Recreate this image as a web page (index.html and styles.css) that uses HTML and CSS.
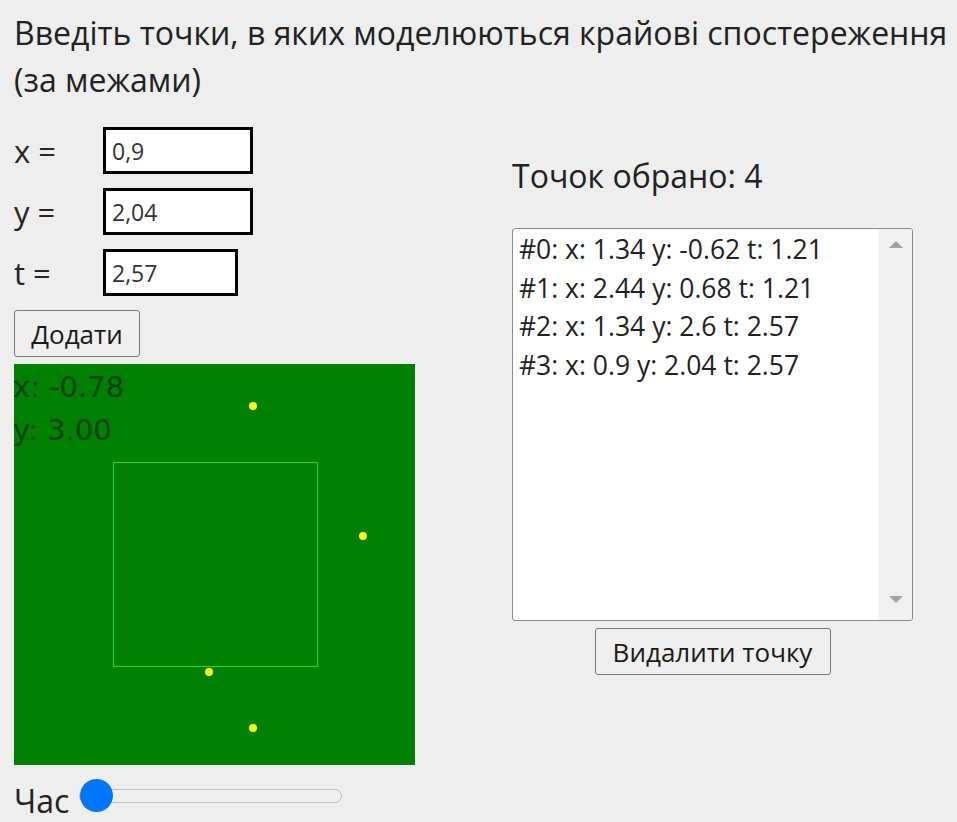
FILE: index.html
```html
<!DOCTYPE html>
<html lang="uk">
<head>
<meta charset="utf-8">
<title>Крайові спостереження</title>
<link rel="stylesheet" href="styles.css">
</head>
<body>
<div class="page">
  <h1 class="title">Введіть точки, в яких моделюються крайові спостереження (за межами)</h1>

  <div class="main">
    <section class="left">
      <div class="field">
        <label class="field-label" for="px">x =</label>
        <input class="field-input" id="px" type="text" value="0,9">
      </div>
      <div class="field">
        <label class="field-label" for="py">y =</label>
        <input class="field-input" id="py" type="text" value="2,04">
      </div>
      <div class="field">
        <label class="field-label" for="pt">t =</label>
        <input class="field-input field-input-short" id="pt" type="text" value="2,57">
      </div>
      <div class="actions">
        <button class="btn" type="button">Додати</button>
      </div>

      <svg class="plot" width="401" height="401" viewBox="0 0 401 401">
        <rect x="0" y="0" width="401" height="401" fill="#008000"/>
        <text class="plot-coord" x="-1" y="33">x: -0.78</text>
        <text class="plot-coord" x="-1" y="76">y: 3.00</text>
        <rect x="99.5" y="98.5" width="204" height="204" fill="none" stroke="#2ecc2e" stroke-width="1.2"/>
        <circle cx="239" cy="42" r="4" fill="#ffff1a"/>
        <circle cx="349" cy="172" r="4" fill="#ffff1a"/>
        <circle cx="195" cy="308" r="4" fill="#ffff1a"/>
        <circle cx="239" cy="364" r="4" fill="#ffff1a"/>
      </svg>

      <div class="time-row">
        <label class="time-label" for="time">Час</label>
        <input class="time-range" id="time" type="range" min="0" max="100" value="0">
      </div>
    </section>

    <section class="right">
      <div class="count">Точок обрано: 4</div>
      <div class="listbox">
        <ul class="list">
          <li>#0: x: 1.34 y: -0.62 t: 1.21</li>
          <li>#1: x: 2.44 y: 0.68 t: 1.21</li>
          <li>#2: x: 1.34 y: 2.6 t: 2.57</li>
          <li>#3: x: 0.9 y: 2.04 t: 2.57</li>
        </ul>
        <div class="scrollbar">
          <span class="arrow arrow-up"></span>
          <span class="arrow arrow-down"></span>
        </div>
      </div>
      <div class="actions-center">
        <button class="btn" type="button">Видалити точку</button>
      </div>
    </section>
  </div>
</div>
</body>
</html>
```

FILE: styles.css
```css
html, body {
  margin: 0;
  padding: 0;
  background: #eeeeee;
}

body {
  font-family: "Open Sans", "Noto Sans", sans-serif;
  color: #1a1a1a;
}

.page {
  padding: 9px 0 0 14px;
}

.title {
  margin: 0;
  font-size: 32px;
  font-weight: 400;
  line-height: 47px;
  color: #222;
}

.main {
  display: flex;
  margin-top: 24px;
}

/* left column: inputs, plot and time slider */
.left {
  width: 401px;
  display: flex;
  flex-direction: column;
}

.field {
  display: flex;
  align-items: center;
  height: 47px;
  margin-bottom: 14px;
}

.field-label {
  width: 89px;
  font-size: 31px;
  color: #262626;
}

.field-input {
  box-sizing: border-box;
  width: 150px;
  height: 47px;
  border: 3px solid #000;
  background: #fff;
  padding: 0 6px;
  font-family: "Open Sans", "Noto Sans", sans-serif;
  font-size: 23px;
  color: #333;
  outline: none;
}

.field-input-short {
  width: 135px;
}

.actions {
  display: flex;
  margin-bottom: 7px;
}

.btn {
  box-sizing: border-box;
  height: 47px;
  padding: 0;
  background: #efefef;
  border: 1px solid #767676;
  border-radius: 3px;
  font-family: "Open Sans", "Noto Sans", sans-serif;
  font-size: 26px;
  color: #1a1a1a;
}

.actions .btn {
  width: 126px;
}

.plot {
  display: block;
}

.plot-coord {
  font-family: "DejaVu Sans", sans-serif;
  font-size: 29px;
  fill: #0a420a;
}

.time-row {
  display: flex;
  align-items: center;
  height: 57px;
  padding-top: 4px;
  box-sizing: border-box;
}

.time-label {
  font-size: 32px;
  line-height: 40px;
  padding-top: 10px;
  color: #222;
  margin-right: 10px;
}

.time-range {
  -webkit-appearance: none;
  appearance: none;
  width: 263px;
  height: 34px;
  margin: 0;
  background: transparent;
}

.time-range::-webkit-slider-runnable-track {
  height: 14px;
  background: #efefef;
  border: 1px solid #bdbdbd;
  border-radius: 8px;
}

.time-range::-webkit-slider-thumb {
  -webkit-appearance: none;
  width: 33px;
  height: 33px;
  margin-top: -11px;
  border-radius: 50%;
  background: #0075ff;
  border: none;
}

/* right column: point counter and list */
.right {
  margin-left: 97px;
  width: 401px;
  padding-top: 29px;
  display: flex;
  flex-direction: column;
}

.count {
  font-size: 32px;
  line-height: 40px;
  color: #222;
  margin-bottom: 32px;
}

.listbox {
  box-sizing: border-box;
  width: 401px;
  height: 393px;
  border: 1px solid #8a8a8a;
  border-radius: 3px;
  background: #fff;
  display: flex;
  overflow: hidden;
}

.list {
  flex: 1;
  list-style: none;
  margin: 0;
  padding: 1px 0 0 6px;
  font-size: 26.5px;
  line-height: 38.5px;
  color: #222;
  white-space: nowrap;
}

.scrollbar {
  position: relative;
  width: 34px;
  background: #f1f1f1;
}

.arrow {
  position: absolute;
  left: 11px;
  width: 0;
  height: 0;
  border-left: 7px solid transparent;
  border-right: 7px solid transparent;
}

.arrow-up {
  top: 12px;
  border-bottom: 7px solid #a3a3a3;
}

.arrow-down {
  bottom: 17px;
  border-top: 7px solid #a3a3a3;
}

.actions-center {
  display: flex;
  justify-content: center;
  margin-top: 7px;
}

.actions-center .btn {
  width: 236px;
}
```
